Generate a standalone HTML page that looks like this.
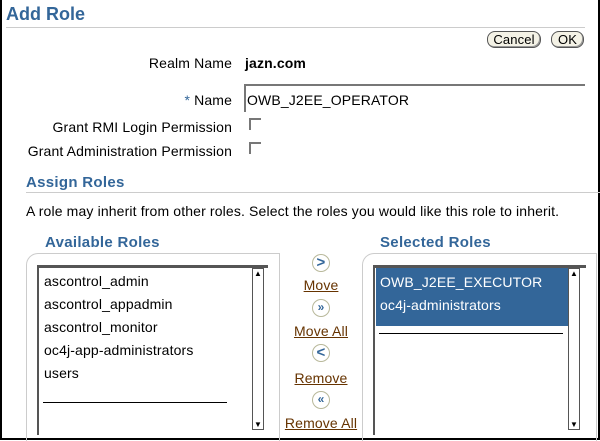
<!DOCTYPE html>
<html><head><style>
body{margin:0;width:600px;height:440px;position:relative;background:#fff;font-family:"Liberation Sans",sans-serif;font-size:14px;letter-spacing:0.14px;color:#000;overflow:hidden}
.a{position:absolute;white-space:nowrap}
.h{color:#336699;font-weight:bold;letter-spacing:0.3px}
.r{text-align:right}
.btn{position:absolute;height:15px;border:1px solid #555;border-radius:8px;background:#f4f2e6;box-shadow:inset -1px -1px 0 #999;font-size:13px;line-height:15px;text-align:center}
.cb{position:absolute;width:10px;height:10px;border-left:2px solid #777;border-top:2px solid #777}
.box{position:absolute;border:1px solid #ccc;border-top-left-radius:12px;border-bottom:none}
.list{position:absolute;border-left:2px solid #555;border-top:3px solid #555;background:#fff}
.sb{position:absolute;width:10px;border:1px solid #555;background:#fff}
.lnk{position:absolute;color:#663300;text-decoration:underline;transform:translateX(-50%);white-space:nowrap}
.ic{position:absolute;width:16px;height:16px;border:1px solid #b8b89a;border-radius:50%;color:#336699;font-weight:bold;font-size:15px;line-height:15px;text-align:center;background:#fff}
.it{position:absolute;left:5px}
</style></head><body>
<div style="position:absolute;left:0;top:0;width:2px;height:440px;background:#000"></div>
<div style="position:absolute;right:0;top:0;width:2px;height:440px;background:#000"></div>
<div style="position:absolute;left:0;bottom:0;width:600px;height:2px;background:#000"></div>

<div class="a h" style="left:6px;top:4px;font-size:18px;letter-spacing:0">Add Role</div>
<div class="a" style="left:6px;top:27px;width:579px;height:1px;background:#ccc"></div>
<div class="btn" style="left:487px;top:31px;width:52px">Cancel</div>
<div class="btn" style="left:551px;top:31px;width:31px">OK</div>

<div class="a r" style="right:368px;top:55px">Realm Name</div>
<div class="a" style="left:245px;top:55px;font-weight:bold;font-size:14px">jazn.com</div>
<div class="a r" style="right:368px;top:92px"><span style="color:#336699">*</span> Name</div>
<div class="a" style="left:244px;top:84px;width:339px;height:26px;border-left:2px solid #777;border-top:2px solid #777"></div>
<div class="a" style="left:247px;top:92px">OWB_J2EE_OPERATOR</div>
<div class="a r" style="right:368px;top:119px">Grant RMI Login Permission</div>
<div class="cb" style="left:249px;top:118px"></div>
<div class="a r" style="right:368px;top:143px">Grant Administration Permission</div>
<div class="cb" style="left:249px;top:142px"></div>

<div class="a h" style="left:26px;top:174px;font-size:15px">Assign Roles</div>
<div class="a" style="left:26px;top:192px;width:574px;height:1px;background:#ccc"></div>
<div class="a" style="left:26px;top:203px">A role may inherit from other roles. Select the roles you would like this role to inherit.</div>

<div class="a h" style="left:45px;top:234px;font-size:15px">Available Roles</div>
<div class="box" style="left:26px;top:253px;width:252px;height:187px"></div>
<div class="list" style="left:37px;top:265px;width:229px;height:167px">
 <div class="it" style="top:5px">ascontrol_admin</div>
 <div class="it" style="top:28px">ascontrol_appadmin</div>
 <div class="it" style="top:51px">ascontrol_monitor</div>
 <div class="it" style="top:74px">oc4j-app-administrators</div>
 <div class="it" style="top:97px">users</div>
 <div style="position:absolute;left:4px;top:134px;width:184px;height:1px;background:#000"></div>
</div>
<div class="sb" style="left:252px;top:268px;height:160px"><div style="font-size:8px;text-align:center">▲</div><div style="position:absolute;bottom:0;width:10px;font-size:8px;text-align:center">▼</div></div>

<div class="ic" style="left:312px;top:254px">&gt;</div>
<div class="lnk" style="left:321px;top:277px">Move</div>
<div class="ic" style="left:312px;top:299px;font-size:12px">»</div>
<div class="lnk" style="left:321px;top:323px">Move All</div>
<div class="ic" style="left:312px;top:344px">&lt;</div>
<div class="lnk" style="left:321px;top:370px">Remove</div>
<div class="ic" style="left:312px;top:391px;font-size:12px">«</div>
<div class="lnk" style="left:321px;top:415px">Remove All</div>

<div class="a h" style="left:380px;top:234px;font-size:15px">Selected Roles</div>
<div class="box" style="left:362px;top:253px;width:233px;height:187px"></div>
<div class="list" style="left:373px;top:265px;width:211px;height:167px">
 <div style="position:absolute;left:1px;top:0px;width:193px;height:58px;background:#336699"></div>
 <div class="it" style="top:6px;color:#fff">OWB_J2EE_EXECUTOR</div>
 <div class="it" style="top:29px;color:#fff">oc4j-administrators</div>
 <div style="position:absolute;left:4px;top:65px;width:184px;height:1px;background:#000"></div>
</div>
<div class="sb" style="left:568px;top:268px;height:160px"><div style="font-size:8px;text-align:center">▲</div><div style="position:absolute;bottom:0;width:10px;font-size:8px;text-align:center">▼</div></div>
</body></html>
